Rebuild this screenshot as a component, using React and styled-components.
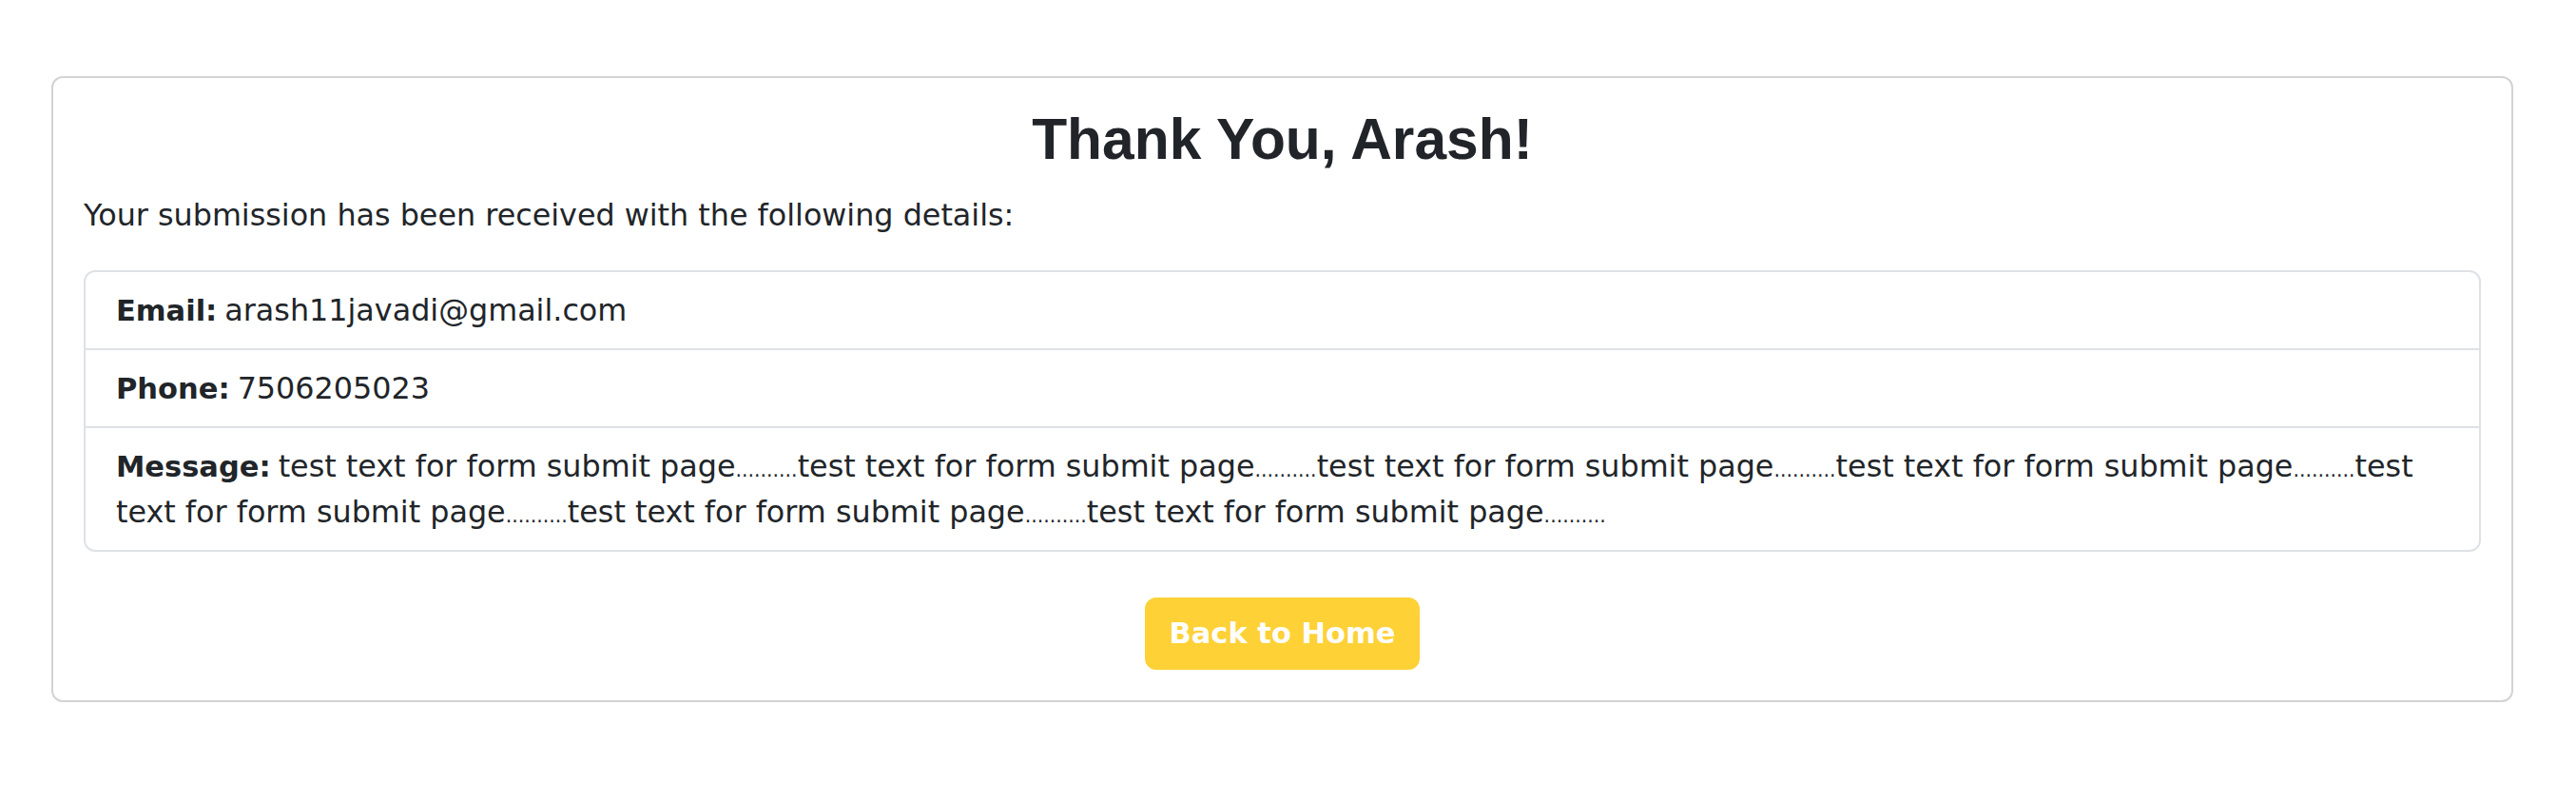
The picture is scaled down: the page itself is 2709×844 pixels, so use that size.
import React from "react";
import styled, { createGlobalStyle } from "styled-components";

const GlobalStyle = createGlobalStyle`
  html, body {
    margin: 0;
    padding: 0;
    background: #ffffff;
  }
  body {
    font-family: "DejaVu Sans", "Liberation Sans", sans-serif;
    color: #212529;
  }
  * { box-sizing: border-box; }
`;

const Page = styled.main`
  padding: 80px 66px 0 54px;
`;

const Card = styled.section`
  border: 2px solid #d3d3d3;
  border-radius: 12px;
  padding: 32px;
  background: #fff;
`;

const Title = styled.h2`
  margin: 0 0 24px;
  text-align: center;
  font-family: "Liberation Sans", Arial, sans-serif;
  font-weight: 700;
  font-size: 60.5px;
  line-height: 64px;
  color: #212529;
`;

const Intro = styled.p`
  margin: 0 0 34px;
  font-size: 31.8px;
  line-height: 48px;
`;

const List = styled.ul`
  list-style: none;
  margin: 0;
  padding: 0;
  border: 2px solid #dee2e6;
  border-radius: 12px;
  overflow: hidden;
`;

const Item = styled.li`
  padding: 16px 32px;
  font-size: 31.8px;
  line-height: 48px;
  & + & {
    border-top: 2px solid #dee2e6;
  }
`;

const Label = styled.strong`
  font-weight: 700;
  font-size: 30.5px;
  line-height: 1;
  margin-right: 8px;
`;

const Dots = styled.span`
  font-size: 20.5px;
  line-height: 1;
`;

const Actions = styled.div`
  display: flex;
  justify-content: center;
  margin-top: 48px;
`;

const HomeButton = styled.a`
  display: inline-block;
  padding: 12px 24px;
  border: 2px solid #fed136;
  border-radius: 12px;
  background: #fed136;
  color: #ffffff;
  font-family: "DejaVu Sans", sans-serif;
  font-weight: 700;
  font-size: 30.5px;
  line-height: 48px;
  text-decoration: none;
`;

const details = [
  { label: "Email:", value: "arash11javadi@gmail.com" },
  { label: "Phone:", value: "7506205023" },
  {
    label: "Message:",
    value:
      "test text for form submit page..........test text for form submit page..........test text for form submit page..........test text for form submit page..........test text for form submit page..........test text for form submit page..........test text for form submit page..........",
  },
];

function renderValue(text) {
  return text
    .split(/(\.{2,})/)
    .map((part, i) =>
      /^\.{2,}$/.test(part) ? <Dots key={i}>{part}</Dots> : <React.Fragment key={i}>{part}</React.Fragment>
    );
}

export default function App() {
  return (
    <>
      <GlobalStyle />
      <Page>
        <Card>
          <Title>Thank You, Arash!</Title>
          <Intro>Your submission has been received with the following details:</Intro>
          <List>
            {details.map((d) => (
              <Item key={d.label}>
                <Label>{d.label}</Label>
                {renderValue(d.value)}
              </Item>
            ))}
          </List>
          <Actions>
            <HomeButton href="#">Back to Home</HomeButton>
          </Actions>
        </Card>
      </Page>
    </>
  );
}
